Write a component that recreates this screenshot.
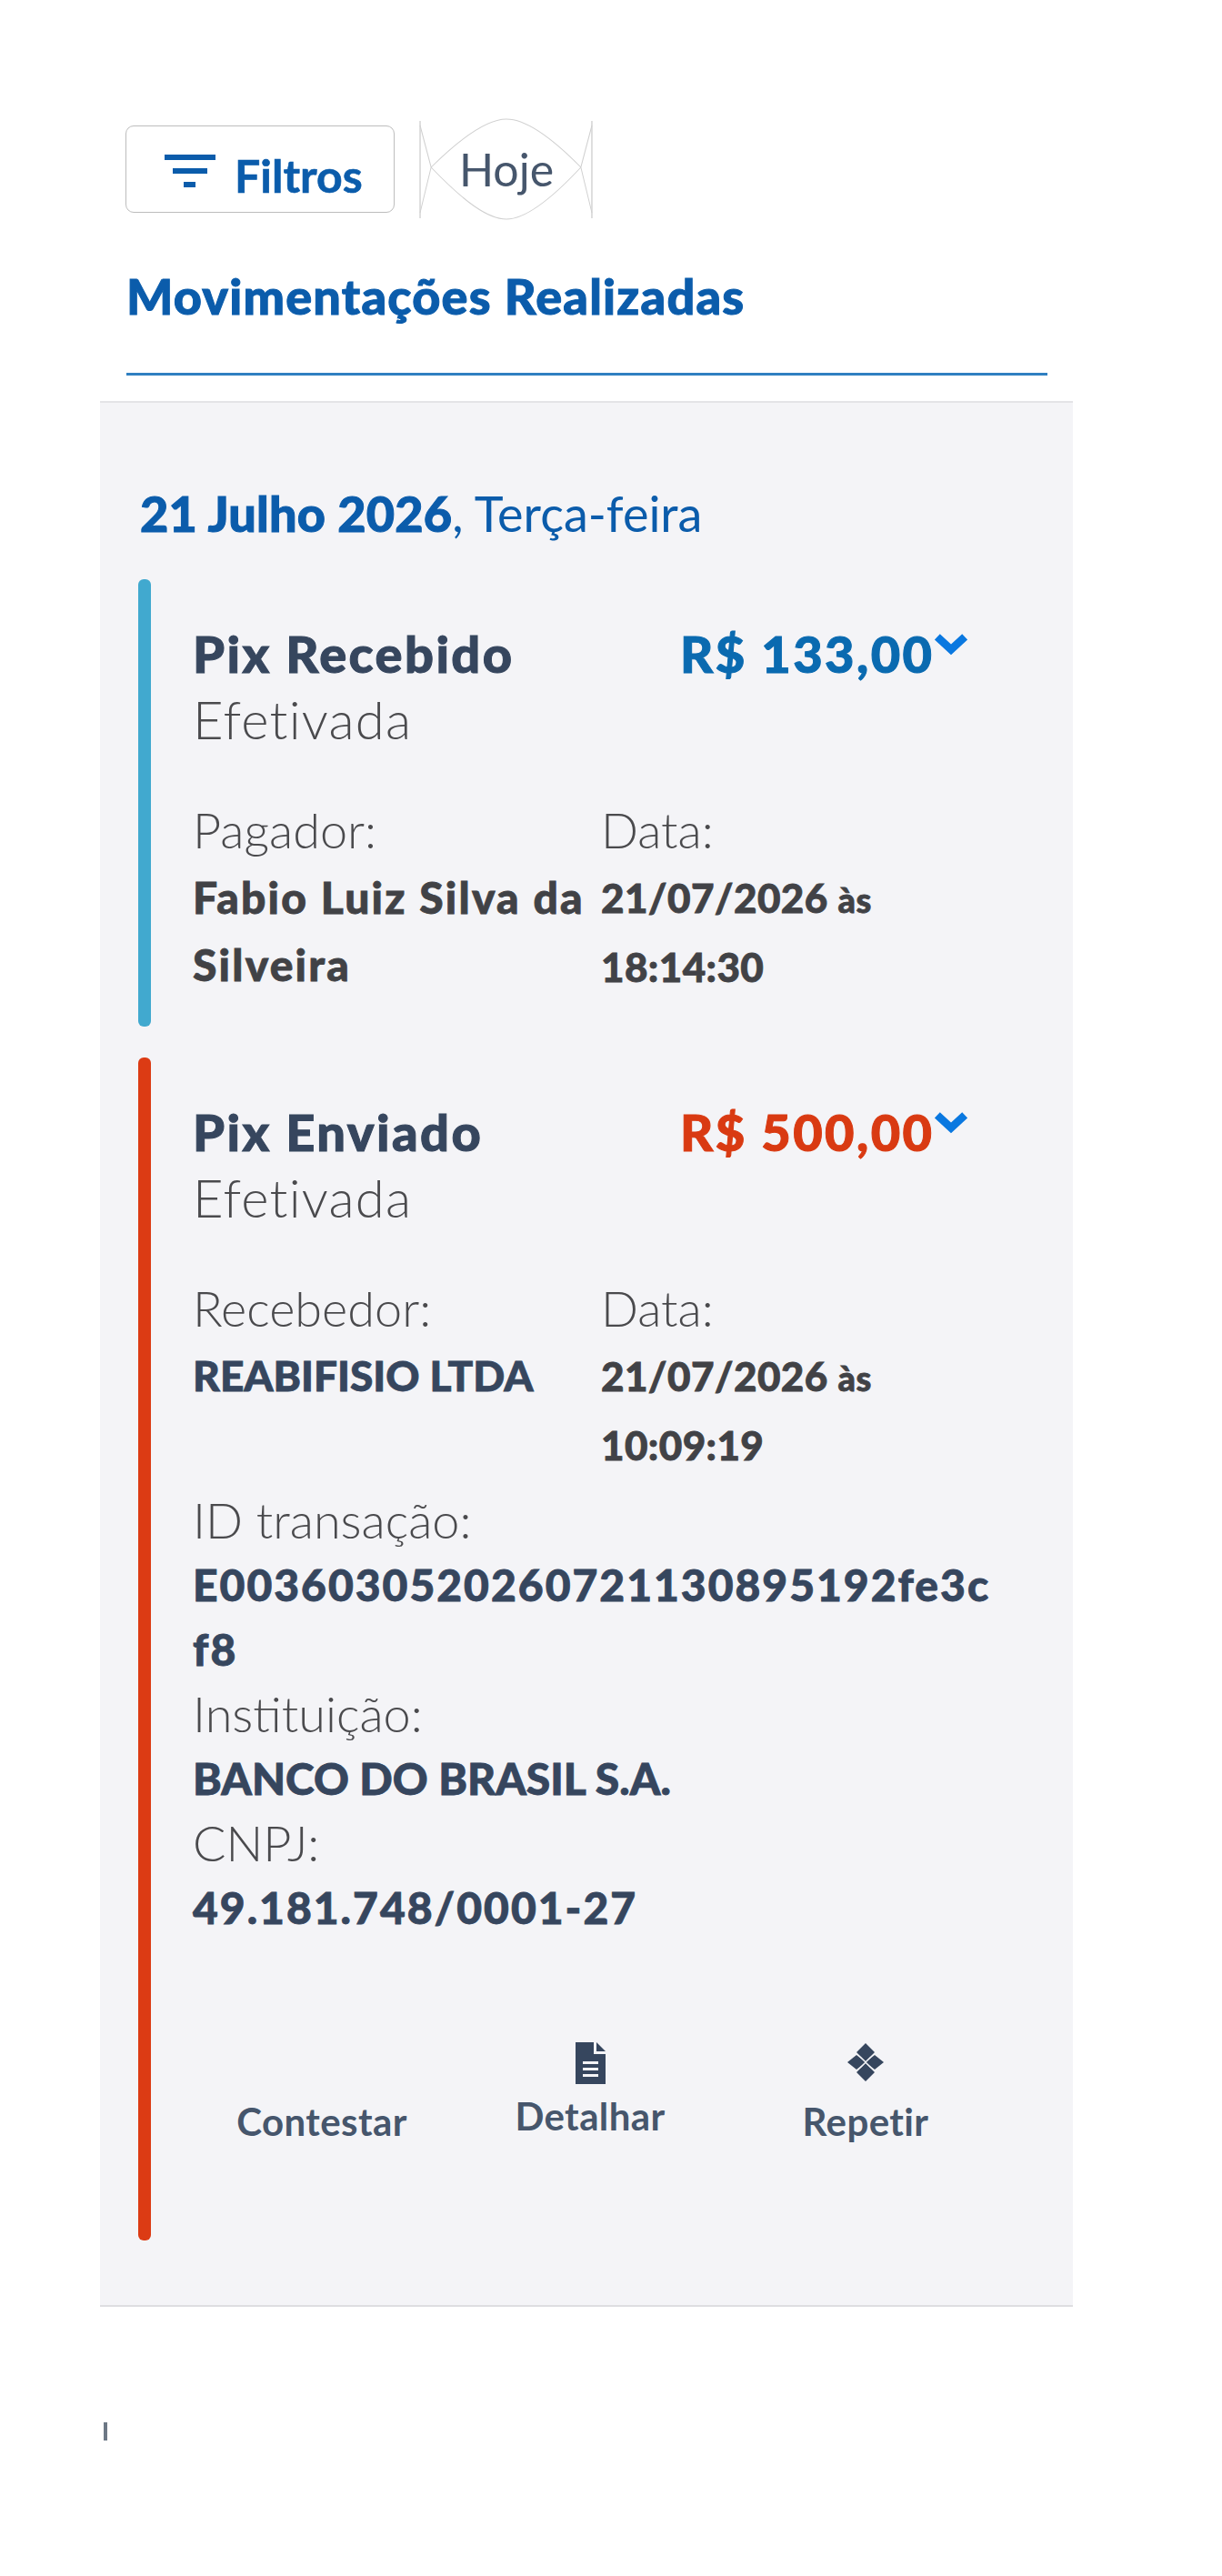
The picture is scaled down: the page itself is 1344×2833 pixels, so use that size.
<div class="page">
	<div class="toolbar">
		<button class="filter-btn">
			<svg class="filter-icon" viewBox="0 0 56 36" aria-hidden="true">
				<rect x="0" y="0" width="56" height="6" fill="#0b5cab" />
				<rect x="9" y="15" width="38" height="6" fill="#0b5cab" />
				<rect x="21" y="30" width="13" height="6" fill="#0b5cab" />
			</svg>
			<span>Filtros</span>
		</button>
		<div class="today">
			<svg class="today-shape" viewBox="0 0 192 112" preserveAspectRatio="none" aria-hidden="true">
				<path d="M2 3 V110 M189 3 V110" stroke="#d5d5d5" stroke-width="1.5" fill="none" />
				<path d="M2 8 L14 54 C 50 18 76 1 96 1 C 116 1 142 18 177 54 L189 8 M2 104 L14 54 C 50 92 76 111 96 111 C 116 111 142 92 177 54 L189 104" stroke="#d0d0d0" stroke-width="1" fill="none" />
			</svg>
			<span>Hoje</span>
		</div>
	</div>

	<h2 class="title">Movimentações Realizadas</h2>
	<div class="rule"></div>

	<section class="panel">
		<p class="date"><strong>21 Julho 2026</strong>, Terça-feira</p>

		<article class="card first">
			<div class="bar teal"></div>
			<div class="body">
				<div class="head">
					<div class="head-left">
						<div class="kind">Pix Recebido</div>
						<div class="status">Efetivada</div>
					</div>
					<div class="amount blue">R$ 133,00</div>
					<svg class="chevron" viewBox="0 0 34 24" aria-hidden="true"><path d="M3 4 L17 17 L31 4" stroke="#0a78e0" stroke-width="8" fill="none" /></svg>
				</div>
				<div class="fields">
					<div class="field">
						<div class="label">Pagador:</div>
						<div class="value name">Fabio Luiz Silva da Silveira</div>
					</div>
					<div class="field">
						<div class="label">Data:</div>
						<div class="value stamp">21/07/2026 <small>às</small><br />18:14:30</div>
					</div>
				</div>
			</div>
		</article>

		<article class="card second">
			<div class="bar red"></div>
			<div class="body">
				<div class="head">
					<div class="head-left">
						<div class="kind">Pix Enviado</div>
						<div class="status">Efetivada</div>
					</div>
					<div class="amount orange">R$ 500,00</div>
					<svg class="chevron" viewBox="0 0 34 24" aria-hidden="true"><path d="M3 4 L17 17 L31 4" stroke="#0a78e0" stroke-width="8" fill="none" /></svg>
				</div>
				<div class="fields">
					<div class="field">
						<div class="label">Recebedor:</div>
						<div class="value slate company">REABIFISIO LTDA</div>
					</div>
					<div class="field">
						<div class="label">Data:</div>
						<div class="value stamp">21/07/2026 <small>às</small><br />10:09:19</div>
					</div>
				</div>
				<div class="details">
					<div class="label">ID transação:</div>
					<div class="value slate code">E0036030520260721130895192fe3c<br />f8</div>
					<div class="label">Instituição:</div>
					<div class="value slate">BANCO DO BRASIL S.A.</div>
					<div class="label">CNPJ:</div>
					<div class="value slate code">49.181.748/0001-27</div>
				</div>
				<div class="actions">
					<div class="action">
						<span class="action-label">Contestar</span>
					</div>
					<div class="action detail">
						<svg viewBox="0 0 34 46" class="doc" aria-hidden="true">
							<path d="M1 0 H21 V13 H34 V46 H1 Z" fill="#36465e" />
							<path d="M24 0 L34 10 H24 Z" fill="#36465e" />
							<rect x="9" y="21" width="17" height="3" fill="#f4f4f7" />
							<rect x="9" y="28" width="17" height="3" fill="#f4f4f7" />
							<rect x="9" y="35" width="17" height="3" fill="#f4f4f7" />
						</svg>
						<span class="action-label">Detalhar</span>
					</div>
					<div class="action repeat">
						<svg viewBox="0 0 40 42" class="pix" aria-hidden="true">
							<path d="M20 0 L30 10 L20 20 L10 10 Z M20 22 L30 32 L20 42 L10 32 Z M10 13 L20 21 L10 29 L0 21 Z M30 13 L40 21 L30 29 L20 21 Z" fill="#36465e" />
							<path d="M14 15 L26 27 M26 15 L14 27" stroke="#f4f4f7" stroke-width="1.2" fill="none" />
						</svg>
						<span class="action-label">Repetir</span>
					</div>
				</div>
			</div>
		</article>
	</section>

	<div class="tick"></div>
</div>

<style>
	:global(body) {
		margin: 0;
		background: #fff;
	}

	.page {
		height: 2833px;
		overflow: hidden;
		padding-top: 130px;
		box-sizing: border-box;
		font-family: 'Lato', 'Liberation Sans', sans-serif;
		color: #414246;
	}

	.toolbar {
		display: flex;
		align-items: center;
		gap: 26px;
		margin-left: 138px;
		height: 112px;
	}

	.filter-btn {
		display: flex;
		align-items: center;
		gap: 21px;
		width: 296px;
		height: 96px;
		padding: 14px 0 0 42px;
		box-sizing: border-box;
		background: #fff;
		border: 1.5px solid #bdbdbd;
		border-radius: 9px;
		font: inherit;
		font-size: 50px;
		font-weight: 700;
		color: #0b5cab;
		-webkit-text-stroke: 0.6px #0b5cab;
	}

	.filter-icon {
		width: 56px;
		height: 36px;
		margin-top: -10px;
	}

	.today {
		position: relative;
		display: flex;
		align-items: center;
		justify-content: center;
		width: 194px;
		height: 112px;
		font-size: 50px;
		color: #46566c;
	}

	.today-shape {
		position: absolute;
		inset: 0;
		width: 100%;
		height: 100%;
	}

	.title {
		margin: 54px 0 0 139px;
		font-size: 54px;
		line-height: 60px;
		font-weight: 900;
		letter-spacing: 1.2px;
		color: #0b5cab;
		-webkit-text-stroke: 1px #0b5cab;
	}

	.rule {
		width: 1013px;
		height: 3px;
		margin: 54px 0 0 139px;
		background: #2f7fc1;
	}

	.panel {
		width: 1070px;
		height: 2096px;
		box-sizing: border-box;
		margin: 28px 0 0 110px;
		padding: 92px 42px 0;
		background: #f4f4f7;
		border-top: 2px solid #e4e4e7;
		border-bottom: 2px solid #dedee1;
	}

	.date {
		margin: 0 0 0 2px;
		font-size: 54px;
		line-height: 60px;
		color: #0b5cab;
	}

	.date strong {
		font-weight: 900;
		letter-spacing: 0.2px;
		-webkit-text-stroke: 1px #0b5cab;
	}

	.card {
		display: flex;
		gap: 46px;
	}

	.first {
		height: 492px;
		margin-top: 42px;
	}

	.second {
		height: 1301px;
		margin-top: 34px;
	}

	.bar {
		flex: none;
		width: 14px;
		border-radius: 6px;
	}

	.teal {
		background: #41a9cf;
	}

	.red {
		background: #dc3b14;
	}

	.body {
		flex: 1;
		min-width: 0;
		padding-top: 50px;
	}

	.head {
		display: flex;
		align-items: flex-start;
	}

	.head-left {
		width: 536px;
	}

	.kind {
		font-size: 56px;
		line-height: 64px;
		font-weight: 900;
		letter-spacing: 2.4px;
		color: #36465e;
		-webkit-text-stroke: 1px #36465e;
	}

	.status {
		font-size: 58px;
		font-weight: 300;
		line-height: 72px;
		letter-spacing: 1.2px;
		margin-top: 4px;
		color: #4a4a4d;
	}

	.amount {
		font-size: 56px;
		line-height: 64px;
		font-weight: 900;
		letter-spacing: 2.4px;
		white-space: nowrap;
		-webkit-text-stroke: 1px currentColor;
	}

	.blue {
		color: #0a6ab0;
	}

	.orange {
		color: #d93a12;
	}

	.chevron {
		flex: none;
		width: 38px;
		height: 26px;
		margin: 9px 0 0 0;
	}

	.fields {
		display: grid;
		grid-template-columns: 449px 1fr;
		margin-top: 49px;
	}

	.label {
		font-size: 54px;
		font-weight: 300;
		line-height: 74px;
		color: #4a4a4d;
	}

	.value {
		font-size: 48px;
		font-weight: 900;
		line-height: 74px;
		color: #414246;
		-webkit-text-stroke: 0.8px currentColor;
	}

	.name {
		letter-spacing: 2.2px;
	}

	.stamp {
		font-size: 44px;
		letter-spacing: 0.4px;
	}

	.company {
		font-size: 46px;
	}

	.value small {
		font-size: 38px;
	}

	.slate {
		color: #36465e;
	}

	.code {
		letter-spacing: 2px;
	}

	.details {
		margin-top: 10px;
	}

	.details .label,
	.details .value {
		line-height: 71px;
	}

	.actions {
		display: grid;
		grid-template-columns: 284px 306px 300px;
		margin-top: 113px;
		align-items: end;
	}

	.action {
		display: flex;
		flex-direction: column;
		align-items: center;
		justify-content: flex-end;
		gap: 12px;
	}

	.detail {
		padding-bottom: 6px;
	}

	.repeat {
		gap: 21px;
	}

	.doc {
		width: 34px;
		height: 46px;
	}

	.pix {
		width: 40px;
		height: 42px;
	}

	.action-label {
		font-size: 42px;
		line-height: 46px;
		font-weight: 700;
		letter-spacing: 0.4px;
		color: #46566c;
	}

	.tick {
		width: 4px;
		height: 20px;
		margin: 127px 0 0 114px;
		background: #6d7885;
	}
</style>
